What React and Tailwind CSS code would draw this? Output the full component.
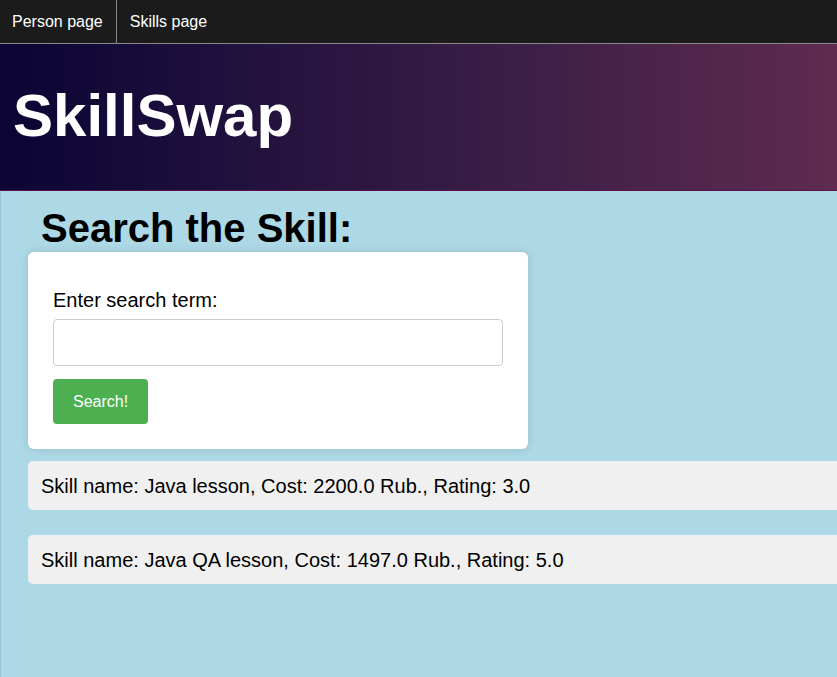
const skills = [
  { name: "Java lesson", cost: "2200.0", rating: "3.0" },
  { name: "Java QA lesson", cost: "1497.0", rating: "5.0" },
];

export default function App() {
  return (
    <div className="min-h-[677px] flex flex-col bg-[#add8e6] font-['Liberation_Sans',Arial,sans-serif] overflow-hidden">
      <nav className="h-[44px] flex bg-[#1b1b1b] border-b border-[#8a8a8a] text-white text-[16px]">
        <a className="flex items-center pl-[12px] pr-[13px] border-r border-[#8a8a8a]">Person page</a>
        <a className="flex items-center px-[13px]">Skills page</a>
      </nav>

      <header className="h-[147px] flex items-center pl-[13px] pb-[3px] bg-gradient-to-r from-[#0b0434] to-[#5f2b51] border-b border-[#5a1048]">
        <h1 className="text-[60px] font-bold text-white leading-none">SkillSwap</h1>
      </header>

      <main className="flex-1 border-l border-[#98c3d2] pl-[27px]">
        <h2 className="mt-[14px] pl-[13px] text-[40px] font-bold leading-[46px] text-black">Search the Skill:</h2>

        <div className="mt-[1px] w-[500px] bg-white rounded-[6px] shadow-[0_0_10px_rgba(0,0,0,0.12)] px-[25px] pt-[37px] pb-[25px]">
          <label className="block text-[20px] leading-[23px] text-black">Enter search term:</label>
          <input className="mt-[7px] block w-[450px] h-[47px] border border-[#cccccc] rounded-[4px] bg-white px-2 text-[16px]" />
          <button className="mt-[13px] h-[45px] px-[20px] bg-[#4caf50] text-white text-[16px] rounded-[4px]">Search!</button>
        </div>

        <div className="mt-[12px] flex flex-col gap-[25px]">
          {skills.map((s, i) => (
            <div key={i} className="w-[900px] h-[49px] flex items-center bg-[#f0f0f0] rounded-[5px] pl-[13px] text-[20px] text-black">
              Skill name: {s.name}, Cost: {s.cost} Rub., Rating: {s.rating}
            </div>
          ))}
        </div>
      </main>
    </div>
  );
}
